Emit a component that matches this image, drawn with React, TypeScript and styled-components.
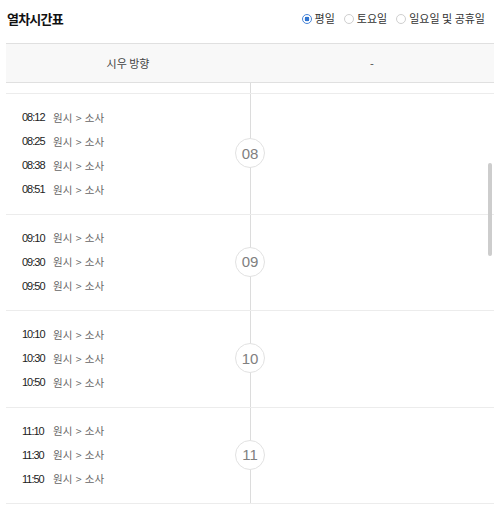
import React from "react";
import styled, { createGlobalStyle } from "styled-components";

const Global = createGlobalStyle`
  html, body { margin: 0; padding: 0; background: #fff; }
  body { font-family: "Liberation Sans", "Noto Sans CJK KR", sans-serif; color: #333; overflow: hidden; }
`;

const Page = styled.div`
  width: 500px;
  height: 505px;
  padding: 0 6px;
  box-sizing: border-box;
  display: flex;
  flex-direction: column;
  overflow: hidden;
`;

const TitleBar = styled.div`
  height: 43px;
  display: flex;
  align-items: center;
  justify-content: space-between;
  padding-left: 1px;
`;

const Title = styled.h2`
  margin: 0;
  font-size: 13px;
  font-weight: 700;
  color: #111;
  letter-spacing: -0.8px;
  font-family: "Noto Sans CJK KR", sans-serif;
  margin-top: -6px;
`;

const Radios = styled.div`
  display: flex;
  align-items: center;
  gap: 9px;
  margin-top: -7px;
  margin-right: 9px;
`;

const RadioLabel = styled.label`
  display: flex;
  align-items: center;
  gap: 3px;
  font-size: 11px;
  color: #333;
  font-family: "Noto Sans CJK KR", sans-serif;
`;

const RadioDot = styled.span<{ $on?: boolean }>`
  width: 10px;
  height: 10px;
  margin-top: 2px;
  border-radius: 50%;
  box-sizing: border-box;
  border: 1px solid ${(p) => (p.$on ? "#4a86d8" : "#cfcfcf")};
  background: ${(p) =>
    p.$on ? "radial-gradient(circle, #2f74d0 0 2.2px, #fff 2.6px)" : "#fff"};
`;

const Header = styled.div`
  height: 38px;
  display: grid;
  grid-template-columns: 1fr 1fr;
  align-items: center;
  background: #f8f8f8;
  border-top: 1px solid #e0e0e0;
  border-bottom: 1px solid #e0e0e0;
  font-size: 11px;
  color: #444;
  font-family: "Noto Sans CJK KR", sans-serif;
`;

const HeaderCell = styled.div`
  text-align: center;
`;

const ListWrap = styled.div`
  position: relative;
  flex: 1;
  overflow: hidden;
`;

const List = styled.div`
  background: linear-gradient(#dcdcdc, #dcdcdc) no-repeat 243.5px 0 / 1px 100%;
`;

const Tail = styled.div`
  height: 10px;
  border-bottom: 1px solid #ececec;
`;

const Group = styled.div`
  display: grid;
  grid-template-columns: 229px 30px 1fr;
  border-bottom: 1px solid #ececec;
  padding: 11px 0 12.5px;
`;

const Rows = styled.div`
  display: flex;
  flex-direction: column;
  padding-left: 16px;
`;

const Row = styled.div`
  height: 24px;
  display: flex;
  align-items: center;
  font-size: 11px;
`;

const Time = styled.span`
  width: 31px;
  color: #222;
  letter-spacing: -1px;
`;

const Route = styled.span`
  color: #666;
  font-family: "Noto Sans CJK KR", sans-serif;
  font-size: 10.5px;
  word-spacing: 1px;
`;

const Hour = styled.div`
  align-self: center;
  width: 30px;
  height: 30px;
  border-radius: 50%;
  box-sizing: border-box;
  border: 1px solid #e2e2e2;
  background: #fff;
  display: flex;
  align-items: center;
  justify-content: center;
  font-size: 15px;
  color: #808080;
`;

const Thumb = styled.div`
  position: absolute;
  right: 2px;
  top: 80px;
  width: 4px;
  height: 93px;
  border-radius: 2px;
  background: #cdcdcd;
`;

const groups = [
  { hour: "08", times: ["08:12", "08:25", "08:38", "08:51"] },
  { hour: "09", times: ["09:10", "09:30", "09:50"] },
  { hour: "10", times: ["10:10", "10:30", "10:50"] },
  { hour: "11", times: ["11:10", "11:30", "11:50"] },
];

export default function App() {
  return (
    <>
      <Global />
      <Page>
        <TitleBar>
          <Title>열차시간표</Title>
          <Radios>
            <RadioLabel>
              <RadioDot $on />
              평일
            </RadioLabel>
            <RadioLabel>
              <RadioDot />
              토요일
            </RadioLabel>
            <RadioLabel>
              <RadioDot />
              일요일 및 공휴일
            </RadioLabel>
          </Radios>
        </TitleBar>
        <Header>
          <HeaderCell>시우 방향</HeaderCell>
          <HeaderCell>-</HeaderCell>
        </Header>
        <ListWrap>
          <List>
            <Tail />
            {groups.map((g) => (
              <Group key={g.hour}>
                <Rows>
                  {g.times.map((t) => (
                    <Row key={t}>
                      <Time>{t}</Time>
                      <Route>원시 &gt; 소사</Route>
                    </Row>
                  ))}
                </Rows>
                <Hour>{g.hour}</Hour>
              </Group>
            ))}
          </List>
          <Thumb />
        </ListWrap>
      </Page>
    </>
  );
}
